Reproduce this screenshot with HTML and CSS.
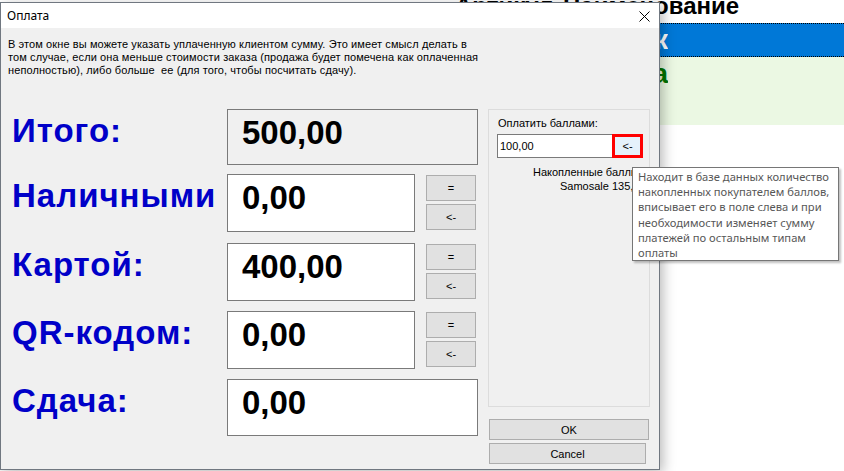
FILE: index.html
```html
<!DOCTYPE html>
<html lang="ru">
<head>
    <meta charset="UTF-8">
    <title>Оплата</title>
    <link rel="stylesheet" href="styles.css">
</head>
<body>
    <div class="desktop">
        <!-- main window behind the dialog -->
        <div class="app">
            <div class="app-head">
                <span class="cell"></span>
                <span class="cell art">Артикул</span>
                <span class="cell name">Наименование</span>
            </div>
            <div class="app-row selected">
                <span class="cell"></span>
                <span class="cell art"></span>
                <span class="cell name">Чек</span>
            </div>
            <div class="app-row paid">
                <span class="cell"></span>
                <span class="cell art"></span>
                <span class="cell name">Оплата</span>
            </div>
        </div>

        <div class="dialog">
            <div class="titlebar">
                <span class="title">Оплата</span>
                <svg class="close" width="11" height="11" viewBox="0 0 11 11">
                    <path d="M0.5 0.5 L10.5 10.5 M10.5 0.5 L0.5 10.5" stroke="#000" stroke-width="1" fill="none"/>
                </svg>
            </div>
            <div class="dialog-body">
                <p class="hint">
                    В этом окне вы можете указать уплаченную клиентом сумму. Это имеет смысл делать в<br>
                    том случае, если она меньше стоимости заказа (продажа будет помечена как оплаченная<br>
                    неполностью), либо больше&nbsp; ее (для того, чтобы посчитать сдачу).
                </p>

                <div class="main">
                    <div class="amounts">
                        <div class="amount-row total">
                            <div class="label">Итого:</div>
                            <div class="field readonly wide">500,00</div>
                        </div>
                        <div class="amount-row cash">
                            <div class="label">Наличными</div>
                            <div class="field">0,00</div>
                            <div class="pair">
                                <button class="small-btn">=</button>
                                <button class="small-btn">&lt;-</button>
                            </div>
                        </div>
                        <div class="amount-row card">
                            <div class="label">Картой:</div>
                            <div class="field">400,00</div>
                            <div class="pair">
                                <button class="small-btn">=</button>
                                <button class="small-btn">&lt;-</button>
                            </div>
                        </div>
                        <div class="amount-row qr">
                            <div class="label">QR-кодом:</div>
                            <div class="field">0,00</div>
                            <div class="pair">
                                <button class="small-btn">=</button>
                                <button class="small-btn">&lt;-</button>
                            </div>
                        </div>
                        <div class="amount-row change">
                            <div class="label">Сдача:</div>
                            <div class="field wide">0,00</div>
                        </div>
                    </div>

                    <div class="side">
                        <div class="bonus-group">
                            <div class="bonus-caption">Оплатить баллами:</div>
                            <div class="bonus-input">
                                <input type="text" value="100,00" class="bonus-value">
                                <button class="bonus-btn">&lt;-</button>
                            </div>
                            <div class="bonus-note">
                                <div class="note-line first">Накопленные баллы</div>
                                <div class="note-line second">Samosale 135,00</div>
                            </div>
                        </div>
                        <button class="cmd-btn ok">OK</button>
                        <button class="cmd-btn cancel">Cancel</button>
                    </div>
                </div>
            </div>

            <div class="tooltip">
                Находит в базе данных количество<br>
                накопленных покупателем баллов,<br>
                вписывает его в поле слева и при<br>
                необходимости изменяет сумму<br>
                платежей по остальным типам<br>
                оплаты
            </div>
        </div>
    </div>
</body>
</html>
```

FILE: styles.css
```css
body {
    margin: 0;
    padding: 0;
    background-color: #fff;
    font-family: "Liberation Sans", Arial, sans-serif;
}
.desktop {
    position: relative;
    width: 844px;
    height: 471px;
    overflow: hidden;
}

/* window behind */
.app-head,
.app-row {
    display: grid;
    grid-template-columns: 452px 108px 108px;
    font-weight: bold;
    white-space: nowrap;
}
.app-head {
    height: 23px;
    font-size: 24px;
    line-height: 12px;
    color: #000;
}
.app-head .cell {
    padding-left: 3px;
}
.app-row {
    font-size: 28px;
}
.app-row .name {
    text-align: right;
    overflow: hidden;
}
.app-row.selected {
    height: 32px;
    line-height: 32px;
    background-color: #0078d7;
    color: #fff;
    border-top: 1px dotted #000;
    border-bottom: 1px dotted #000;
}
.app-row.paid {
    height: 68px;
    line-height: 34px;
    background-color: #ebf8e3;
    color: #007400;
}

/* dialog */
.dialog {
    position: absolute;
    left: 0;
    top: 2px;
    width: 660px;
    height: 468px;
    box-sizing: border-box;
    border: 1px solid #707780;
    background-color: #f0f0f0;
    box-shadow: 3px 3px 12px rgba(0, 0, 0, 0.28);
}
.titlebar {
    height: 25px;
    background-color: #fff;
    display: flex;
    align-items: center;
    justify-content: space-between;
    padding: 0 9px 0 6px;
}
.title {
    font-family: "Noto Sans", sans-serif;
    font-size: 12px;
    color: #000;
}
.close {
    display: block;
    margin-top: 1px;
}
.dialog-body {
    padding: 10px 7px 0;
}
.hint {
    margin: 0;
    font-size: 11px;
    line-height: 13px;
    letter-spacing: 0.1px;
    color: #000;
}
.main {
    display: flex;
    margin-top: 32px;
}
.amounts {
    width: 466px;
    margin-left: 4px;
}
.amount-row {
    display: flex;
    align-items: flex-start;
}
.amount-row.cash {
    margin-top: 9px;
}
.amount-row.card {
    margin-top: 11px;
}
.amount-row.qr,
.amount-row.change {
    margin-top: 10px;
}
.label {
    width: 215px;
    padding-top: 3px;
    font-size: 33px;
    line-height: 37px;
    font-weight: bold;
    letter-spacing: 1px;
    color: #0000c8;
    white-space: nowrap;
}
.field {
    width: 188px;
    height: 58px;
    box-sizing: border-box;
    padding: 4px 0 0 14px;
    background-color: #fff;
    border: 1px solid #7a7a7a;
    font-size: 33px;
    line-height: 37px;
    font-weight: bold;
    color: #000;
}
.field.wide {
    width: 251px;
}
.total .field {
    height: 56px;
}
.change .field {
    height: 57px;
}
.field.readonly {
    background-color: #f0f0f0;
}
.pair {
    display: flex;
    flex-direction: column;
    gap: 3px;
    margin: 1px 0 0 11px;
}
.small-btn {
    width: 50px;
    height: 26px;
    padding: 0;
    background-color: #e1e1e1;
    border: 1px solid #adadad;
    font-family: "Liberation Sans", Arial, sans-serif;
    font-size: 11px;
    color: #000;
}

/* right column */
.side {
    width: 162px;
    margin-left: 10px;
}
.bonus-group {
    height: 298px;
    box-sizing: border-box;
    border: 1px solid #dcdcdc;
    padding: 7px 0 0 9px;
}
.bonus-caption {
    font-size: 11px;
    line-height: 13px;
    color: #000;
}
.bonus-input {
    display: flex;
    margin: 4px 0 0 -1px;
}
.bonus-value {
    width: 116px;
    height: 24px;
    box-sizing: border-box;
    margin: 0;
    padding: 0 0 0 2px;
    border: 1px solid #7a7a7a;
    background-color: #fff;
    font-family: "Liberation Sans", Arial, sans-serif;
    font-size: 11px;
    color: #000;
    outline: none;
}
.bonus-btn {
    width: 31px;
    height: 24px;
    box-sizing: border-box;
    margin-left: -1px;
    padding: 0;
    border: 3px solid #f00;
    background-color: #e5f1fb;
    font-family: "Liberation Sans", Arial, sans-serif;
    font-size: 11px;
    color: #000;
}
.bonus-note {
    margin-top: 7px;
    font-size: 11px;
    line-height: 14px;
    color: #000;
    white-space: nowrap;
}
.note-line.first {
    padding-left: 35px;
}
.note-line.second {
    padding-left: 62px;
}
.cmd-btn {
    display: block;
    height: 21px;
    margin-left: 1px;
    padding: 0;
    background-color: #e1e1e1;
    border: 1px solid #adadad;
    font-family: "Liberation Sans", Arial, sans-serif;
    font-size: 11px;
    color: #000;
}
.cmd-btn.ok {
    width: 160px;
    margin-top: 12px;
}
.cmd-btn.cancel {
    width: 157px;
    margin-top: 3px;
}

/* hint popup over the points button */
.tooltip {
    position: absolute;
    left: 631px;
    top: 164px;
    width: 207px;
    height: 94px;
    box-sizing: border-box;
    padding: 1px 0 0 5px;
    background-color: #fff;
    border: 1px solid #767676;
    box-shadow: 2px 2px 2px rgba(0, 0, 0, 0.25);
    font-family: "Noto Sans", sans-serif;
    font-size: 11.2px;
    line-height: 15.2px;
    color: #575757;
    white-space: nowrap;
}
```
